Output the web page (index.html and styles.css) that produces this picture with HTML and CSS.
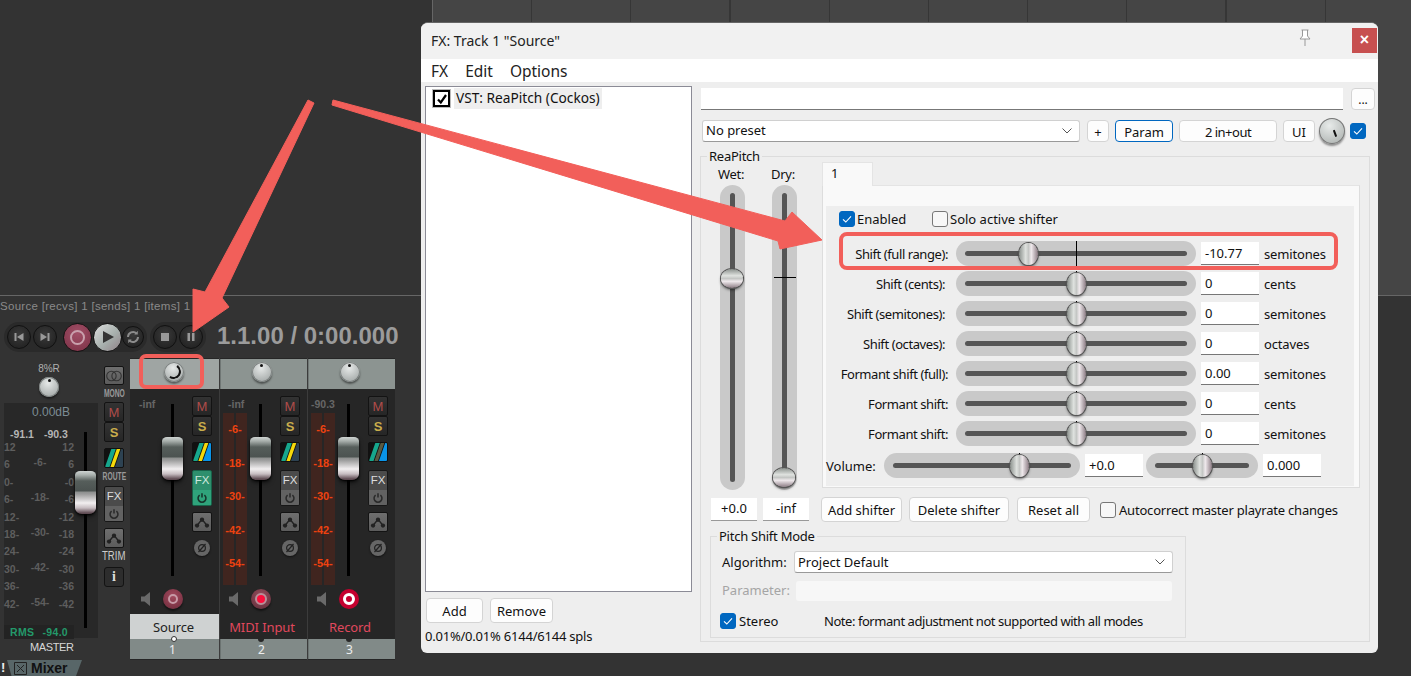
FILE: index.html
```html
<!DOCTYPE html>
<html lang="en">
<head>
    <meta charset="UTF-8">
    <title>FX: Track 1 "Source"</title>
    <link rel="stylesheet" href="styles.css">
</head>
<body>
<svg class="defs" width="0" height="0">
    <symbol id="power" viewBox="0 0 14 14"><path d="M4.2 3.6a4.6 4.6 0 1 0 5.6 0M7 1.5v5" fill="none" stroke="currentColor" stroke-width="1.8"/></symbol>
    <symbol id="env" viewBox="0 0 20 20"><path d="M4 14.5 10 7l6 7.5" fill="none" stroke="#222" stroke-width="1.6"/><circle cx="4.5" cy="14" r="2.4" fill="#222"/><circle cx="10" cy="7.5" r="2.4" fill="#222"/><circle cx="15.5" cy="14" r="2.4" fill="#222"/></symbol>
    <symbol id="speaker" viewBox="0 0 10 14"><path d="M0 4.5h3.5L9 0v14L3.5 9.5H0z" fill="#6a6a6a"/></symbol>
    <symbol id="phase" viewBox="0 0 12 12"><circle cx="6" cy="6" r="3.4" fill="none" stroke="#222" stroke-width="1.2"/><path d="M2.5 10 9.5 2" stroke="#222" stroke-width="1.2"/></symbol>
    <symbol id="check" viewBox="0 0 16 16"><path d="M4 8.3 6.8 11 12 5.4" fill="none" stroke="#fff" stroke-width="1.1"/></symbol>
    <symbol id="chev" viewBox="0 0 12 8"><path d="M1.5 1.5 6 6l4.5-4.5" fill="none" stroke="#555" stroke-width="1"/></symbol>
</svg>

<div class="app">
    <div class="arrange">
        <div class="tcp"></div>
        <div class="timeline"></div>
    </div>

    <div class="lower">
        <div class="track-info">Source [recvs] 1 [sends] 1 [items] 1</div>
        <div class="transport">
            <div class="pill">
                <span class="tbtn"><svg viewBox="0 0 12 12"><path d="M1.5 2h2v8h-2zM10.500 2v8L4 6z" fill="#999"/></svg></span>
                <span class="tbtn"><svg viewBox="0 0 12 12"><path d="M8.500 2h2v8h-2zM1.500 2v8L8 6z" fill="#999"/></svg></span>
                <span class="tbtn rec-big"><i></i></span>
                <span class="tbtn play"><svg viewBox="0 0 14 14"><path d="M2 1v12l11-6z" fill="#333"/></svg></span>
                <span class="tbtn loop"><svg viewBox="0 0 16 16"><path d="M3 8a5 5 0 0 1 8.500-3.500M13 8a5 5 0 0 1-8.500 3.500" fill="none" stroke="#8c8c8c" stroke-width="2"/><path d="M12.800 1.800v3.700H9.300zM3.200 14.200v-3.700h3.500z" fill="#8c8c8c"/></svg></span>
            </div>
            <div class="pill second">
                <span class="tbtn"><svg viewBox="0 0 12 12"><path d="M2 2h8v8H2z" fill="#999"/></svg></span>
                <span class="tbtn"><svg viewBox="0 0 12 12"><path d="M2.500 2h2.500v8H2.500zM7 2h2.500v8H7z" fill="#999"/></svg></span>
            </div>
            <div class="clock">1.1.00 / 0:00.000</div>
        </div>

        <div class="mixer">
            <div class="master">
                <div class="master-left">
                    <div class="pan-text">8%R</div>
                    <div class="knob small"><b></b></div>
                    <div class="master-meter">
                        <div class="master-db">0.00dB</div>
                        <div class="master-peaks"><span>-91.1</span><span>-90.3</span></div>
                        <div class="master-scale">
                            <div class="scale-col">
                                <span>12</span><span>6</span><span>0-</span><span>6-</span><span>12-</span><span>18-</span><span>24-</span><span>30-</span><span>36-</span><span>42-</span>
                            </div>
                            <div class="scale-mid">
                                <span>-6-</span><span>-18-</span><span>-30-</span><span>-42-</span><span>-54-</span>
                            </div>
                            <div class="scale-col right">
                                <span>12</span><span>6</span><span>-0</span><span>-6</span><span>-12</span><span>-18</span><span>-24</span><span>-30</span><span>-36</span><span>-42</span>
                            </div>
                            <div class="fader-col master-fader">
                                <div class="fader-track"><div class="fader-thumb master-thumb"></div></div>
                            </div>
                        </div>
                        <div class="rms"><span>RMS</span><span>-94.0</span></div>
                    </div>
                    <div class="master-name">MASTER</div>
                </div>
                <div class="master-btns">
                    <span class="mbtn grey mono"><svg viewBox="0 0 20 14" width="18" height="12"><circle cx="7" cy="7" r="5.500" fill="none" stroke="#333" stroke-width="1.300"/><circle cx="13" cy="7" r="5.500" fill="none" stroke="#333" stroke-width="1.300"/></svg></span>
                    <span class="mlabel">MONO</span>
                    <span class="mbtn m">M</span>
                    <span class="mbtn s">S</span>
                    <span class="route"><svg viewBox="0 0 20 20"><path d="M0 20 7 0h5L5 20z" fill="#16a78d"/><path d="M6 20 13 0h4l-7 20z" fill="#f5d90a"/><path d="M11 20 18 0h2v20z" fill="#2d4252"/></svg></span>
                    <span class="mlabel">ROUTE</span>
                    <span class="fx-btn"><em>FX</em><i><svg width="12" height="12"><use href="#power"/></svg></i></span>
                    <span class="mbtn grey env"><svg width="20" height="20"><use href="#env"/></svg></span>
                    <span class="mlabel light">TRIM</span>
                    <span class="mbtn info">i</span>
                </div>
            </div>

            <div class="strip selected">
                <div class="pan-head"><div class="knob turned"><b></b></div></div>
                <div class="strip-body">
                    <div class="strip-top">
                        <div class="meter-col"><span class="peak">-inf</span></div>
                        <div class="fader-col"><div class="fader-track"><div class="fader-thumb"></div></div></div>
                        <div class="btn-col">
                            <span class="mbtn m">M</span>
                            <span class="mbtn s">S</span>
                            <span class="route"><svg viewBox="0 0 20 20"><path d="M0 20 7 0h5L5 20z" fill="#16a78d"/><path d="M6 20 13 0h4l-7 20z" fill="#f5d90a"/><path d="M11 20 18 0h2v20z" fill="#0a94e8"/></svg></span>
                            <span class="fx-btn on"><em>FX</em><i><svg width="12" height="12"><use href="#power"/></svg></i></span>
                            <span class="mbtn grey env"><svg width="20" height="20"><use href="#env"/></svg></span>
                            <span class="phase"><svg width="12" height="12"><use href="#phase"/></svg></span>
                        </div>
                    </div>
                    <div class="strip-bottom">
                        <svg class="speaker" width="10" height="14"><use href="#speaker"/></svg>
                        <span class="rec off"><i></i></span>
                    </div>
                </div>
                <div class="strip-name">Source</div>
                <div class="strip-num"><i></i>1</div>
            </div>

            <div class="strip">
                <div class="pan-head"><div class="knob"><b></b></div></div>
                <div class="strip-body">
                    <div class="strip-top">
                        <div class="meter-col">
                            <span class="peak">-inf</span>
                            <div class="meter"><span>-6-</span><span>-18-</span><span>-30-</span><span>-42-</span><span>-54-</span></div>
                        </div>
                        <div class="fader-col"><div class="fader-track"><div class="fader-thumb"></div></div></div>
                        <div class="btn-col">
                            <span class="mbtn m">M</span>
                            <span class="mbtn s">S</span>
                            <span class="route"><svg viewBox="0 0 20 20"><path d="M0 20 7 0h5L5 20z" fill="#16a78d"/><path d="M6 20 13 0h4l-7 20z" fill="#f5d90a"/><path d="M11 20 18 0h2v20z" fill="#2d4252"/></svg></span>
                            <span class="fx-btn"><em>FX</em><i><svg width="12" height="12"><use href="#power"/></svg></i></span>
                            <span class="mbtn grey env"><svg width="20" height="20"><use href="#env"/></svg></span>
                            <span class="phase"><svg width="12" height="12"><use href="#phase"/></svg></span>
                        </div>
                    </div>
                    <div class="strip-bottom">
                        <svg class="speaker" width="10" height="14"><use href="#speaker"/></svg>
                        <span class="rec midi"><i></i></span>
                    </div>
                </div>
                <div class="strip-name">MIDI Input</div>
                <div class="strip-num"><i></i>2</div>
            </div>

            <div class="strip">
                <div class="pan-head"><div class="knob"><b></b></div></div>
                <div class="strip-body">
                    <div class="strip-top">
                        <div class="meter-col">
                            <span class="peak wide">-90.3</span>
                            <div class="meter"><span>-6-</span><span>-18-</span><span>-30-</span><span>-42-</span><span>-54-</span></div>
                        </div>
                        <div class="fader-col"><div class="fader-track"><div class="fader-thumb"></div></div></div>
                        <div class="btn-col">
                            <span class="mbtn m">M</span>
                            <span class="mbtn s">S</span>
                            <span class="route"><svg viewBox="0 0 20 20"><path d="M0 20 7 0h5L5 20z" fill="#16a78d"/><path d="M6 20 13 0h4l-7 20z" fill="#5a5a42"/><path d="M11 20 18 0h2v20z" fill="#0a94e8"/></svg></span>
                            <span class="fx-btn"><em>FX</em><i><svg width="12" height="12"><use href="#power"/></svg></i></span>
                            <span class="mbtn grey env"><svg width="20" height="20"><use href="#env"/></svg></span>
                            <span class="phase"><svg width="12" height="12"><use href="#phase"/></svg></span>
                        </div>
                    </div>
                    <div class="strip-bottom">
                        <svg class="speaker" width="10" height="14"><use href="#speaker"/></svg>
                        <span class="rec armed"><i></i></span>
                    </div>
                </div>
                <div class="strip-name">Record</div>
                <div class="strip-num"><i></i>3</div>
            </div>
        </div>
    </div>

    <div class="tabbar">
        <span class="bang">!</span>
        <div class="mixer-tab">
            <svg width="13" height="13" viewBox="0 0 13 13"><path d="M.5.5h12v12H.5zM3 3l7 7M10 3l-7 7" fill="none" stroke="#222"/></svg>
            <span>Mixer</span>
        </div>
    </div>
</div>

<!-- FX window -->
<div class="fxwin">
    <div class="titlebar">
        <span class="title">FX: Track 1 "Source"</span>
        <svg class="pin" width="16" height="18" viewBox="0 0 16 18"><path d="M4.500 1h7M5.500 1v6L3 10h10l-2.500-3V1M8 10v7" fill="#fff" stroke="#999"/></svg>
        <span class="closebtn">×</span>
    </div>
    <div class="menubar"><span>FX</span><span>Edit</span><span>Options</span></div>
    <div class="fxbody">
        <div class="leftcol">
            <div class="fxlist">
                <div class="fxitem">
                    <span class="oldcheck"><svg width="12" height="12" viewBox="0 0 12 12"><path d="M2 6.500 4.800 9.500 10 2" fill="none" stroke="#000" stroke-width="2.200"/></svg></span>
                    <span class="fxname">VST: ReaPitch (Cockos)</span>
                </div>
            </div>
            <div class="listbtns">
                <button class="btn addbtn">Add</button>
                <button class="btn removebtn">Remove</button>
            </div>
            <div class="status">0.01%/0.01% 6144/6144 spls</div>
        </div>

        <div class="rightcol">
            <div class="toprow">
                <div class="edit presetname"></div>
                <button class="btn dots">...</button>
            </div>
            <div class="presetrow">
                <div class="combo presetcombo"><span>No preset</span><svg width="12" height="8"><use href="#chev"/></svg></div>
                <button class="btn plus">+</button>
                <button class="btn param">Param</button>
                <button class="btn inout">2 in+out</button>
                <button class="btn uibtn">UI</button>
                <div class="knob wetknob"><b></b></div>
                <span class="chk on"><svg width="16" height="16"><use href="#check"/></svg></span>
            </div>

            <div class="group">
                <span class="legend">ReaPitch</span>
                <div class="mainrow">
                    <div class="wetdry">
                        <div class="vcol">
                            <span class="vlabel">Wet:</span>
                            <div class="vslider"><i></i><u style="top:92px"></u><b style="top:93px"></b></div>
                            <div class="valbox">+0.0</div>
                        </div>
                        <div class="vcol">
                            <span class="vlabel">Dry:</span>
                            <div class="vslider"><i></i><u style="top:92px"></u><b style="top:292px"></b></div>
                            <div class="valbox">-inf</div>
                        </div>
                    </div>

                    <div class="shiftercol">
                        <div class="tab">1</div>
                        <div class="tabpanel">
                            <div class="inner">
                                <div class="checks">
                                    <span class="chk on"><svg width="16" height="16"><use href="#check"/></svg></span><label class="enabled">Enabled</label>
                                    <span class="chk"></span><label>Solo active shifter</label>
                                </div>
                                <div class="rows">
                                    <div class="prow">
                                        <label>Shift (full range):</label>
                                        <div class="hslider"><i></i><u style="left:120px"></u><b style="left:72px"></b></div>
                                        <div class="edit num">-10.77</div><span>semitones</span>
                                    </div>
                                    <div class="prow inset">
                                        <label>Shift (cents):</label>
                                        <div class="hslider"><i></i><u style="left:120px"></u><b style="left:120px"></b></div>
                                        <div class="edit num">0</div><span>cents</span>
                                    </div>
                                    <div class="prow inset">
                                        <label>Shift (semitones):</label>
                                        <div class="hslider"><i></i><u style="left:120px"></u><b style="left:120px"></b></div>
                                        <div class="edit num">0</div><span>semitones</span>
                                    </div>
                                    <div class="prow inset">
                                        <label>Shift (octaves):</label>
                                        <div class="hslider"><i></i><u style="left:120px"></u><b style="left:120px"></b></div>
                                        <div class="edit num">0</div><span>octaves</span>
                                    </div>
                                    <div class="prow">
                                        <label>Formant shift (full):</label>
                                        <div class="hslider"><i></i><u style="left:120px"></u><b style="left:120px"></b></div>
                                        <div class="edit num">0.00</div><span>semitones</span>
                                    </div>
                                    <div class="prow">
                                        <label>Formant shift:</label>
                                        <div class="hslider"><i></i><u style="left:120px"></u><b style="left:120px"></b></div>
                                        <div class="edit num">0</div><span>cents</span>
                                    </div>
                                    <div class="prow">
                                        <label>Formant shift:</label>
                                        <div class="hslider"><i></i><u style="left:120px"></u><b style="left:120px"></b></div>
                                        <div class="edit num">0</div><span>semitones</span>
                                    </div>
                                </div>
                                <div class="volrow">
                                    <label>Volume:</label>
                                    <div class="hslider vol1"><i></i><u style="left:135px"></u><b style="left:135px"></b></div>
                                    <div class="edit num">+0.0</div>
                                    <div class="hslider vol2"><i></i><u style="left:56px"></u><b style="left:56px"></b></div>
                                    <div class="edit num">0.000</div>
                                </div>
                            </div>
                        </div>
                        <div class="shiftbtns">
                            <button class="btn addsh">Add shifter</button>
                            <button class="btn delsh">Delete shifter</button>
                            <button class="btn resetsh">Reset all</button>
                            <span class="chk"></span><label>Autocorrect master playrate changes</label>
                        </div>
                    </div>
                </div>

                <div class="group modegroup">
                    <span class="legend">Pitch Shift Mode</span>
                    <div class="moderow">
                        <label class="modelabel">Algorithm:</label>
                        <div class="combo algo"><span>Project Default</span><svg width="12" height="8"><use href="#chev"/></svg></div>
                    </div>
                    <div class="moderow paramrow">
                        <label class="modelabel disabled">Parameter:</label>
                        <div class="paramfield"></div>
                    </div>
                    <div class="moderow stereorow">
                        <span class="chk on"><svg width="16" height="16"><use href="#check"/></svg></span><label class="stereo">Stereo</label>
                        <span class="note">Note: formant adjustment not supported with all modes</span>
                    </div>
                </div>
            </div>
        </div>
    </div>
</div>

<!-- red annotations drawn over the screenshot -->
<svg class="marks" width="1411" height="676" viewBox="0 0 1411 676">
    <path d="M308 100 314 103 222 298 229 307 193 332 193 289 205 292z" fill="#f25f5a" stroke="#f25f5a" stroke-linejoin="round"/>
    <path d="M333 100 332 105 778 241 780 249 822 240 792 212 785 221z" fill="#f25f5a" stroke="#f25f5a" stroke-linejoin="round"/>
    <rect x="841" y="234" width="495" height="34" rx="6" fill="none" stroke="#f25f5a" stroke-width="4"/>
    <rect x="141" y="356" width="61" height="31" rx="5" fill="none" stroke="#f25f5a" stroke-width="4"/>
</svg>
</body>
</html>
```

FILE: styles.css
```css
* {
    box-sizing: border-box;
}
html, body {
    margin: 0;
    padding: 0;
    height: 100%;
    overflow: hidden;
    background: #333;
}
.defs {
    position: absolute;
}
.app {
    width: 1411px;
    height: 676px;
    display: flex;
    flex-direction: column;
    font-family: "Liberation Sans", Arial, sans-serif;
    color: #999;
}

/* arrange view */
.arrange {
    height: 296px;
    display: flex;
    border-bottom: 1px solid #666;
}
.tcp {
    width: 433px;
    background: #333;
    border-right: 1px solid #666;
}
.timeline {
    flex: 1;
    background: #454545 repeating-linear-gradient(90deg, transparent 0 98px, #363636 98px 99.200px);
}
.lower {
    height: 364px;
    background: #333;
}
.track-info {
    height: 20px;
    padding-top: 3px;
    font-size: 11.500px;
    line-height: 14px;
    color: #8a8a8a;
    letter-spacing: .3px;
    white-space: nowrap;
}

/* transport */
.transport {
    height: 42px;
    display: flex;
    align-items: flex-start;
    padding: 6px 0 0 4px;
}
.pill {
    display: flex;
    align-items: center;
    height: 30px;
    padding: 0 2px;
    background: #2a2a2a;
    border-radius: 15px;
}
.pill.second {
    margin-left: 3px;
}
.tbtn {
    width: 24px;
    height: 24px;
    margin: 0 1px;
    border-radius: 50%;
    background: radial-gradient(circle at 50% 40%, #3a3a3a, #1d1d1d);
    border: 1px solid #111;
    display: flex;
    align-items: center;
    justify-content: center;
}
.tbtn svg {
    width: 12px;
    height: 12px;
}
.rec-big {
    width: 29px;
    height: 29px;
    margin-left: 5px;
    margin-right: 0;
    background: radial-gradient(circle at 50% 35%, #a24f67, #7a3045);
}
.rec-big i {
    width: 15px;
    height: 15px;
    border-radius: 50%;
    border: 2px solid #c9a0ad;
}
.play {
    width: 29px;
    height: 29px;
    margin-left: 1px;
    background: linear-gradient(135deg, #ddd, #a7b0ad 55%, #8f8086);
}
.play svg {
    width: 14px;
    height: 14px;
}
.loop {
    width: 22px;
    height: 22px;
    margin-left: -1px;
}
.loop svg {
    width: 16px;
    height: 16px;
}
.clock {
    margin: 0 0 0 11px;
    font-size: 24px;
    line-height: 28px;
    font-weight: bold;
    color: #9b9b9b;
    white-space: nowrap;
}

/* mixer */
.mixer {
    height: 302px;
    display: flex;
}
.master {
    width: 130px;
    display: flex;
    background: #333;
}
.master-left {
    width: 98px;
    margin-left: 4px;
    display: flex;
    flex-direction: column;
    align-items: center;
}
.pan-text {
    margin: 5px 0 0 -8px;
    font-size: 10px;
    line-height: 12px;
    color: #b0b0b0;
}
.knob {
    position: relative;
    width: 20px;
    height: 20px;
    border-radius: 50%;
    background: radial-gradient(circle at 45% 30%, #e6e9e8, #a9aead 75%);
    box-shadow: inset 0 0 0 1px #7b807f, 0 2px 2px rgba(0, 0, 0, .45);
}
.knob b {
    position: absolute;
    left: 50%;
    top: 2px;
    width: 3px;
    height: 3px;
    margin-left: -1.500px;
    border-radius: 50%;
    background: #111;
}
.knob.small {
    margin: 2px 0 0 -8px;
}
.knob.turned b {
    left: 2px;
    top: 2px;
    width: 15px;
    height: 15px;
    margin: 0;
    border: 2px solid transparent;
    border-right-color: #111;
    border-bottom-color: #111;
    border-radius: 50%;
    background: none;
    transform: rotate(-12deg);
}
.master-meter {
    width: 94px;
    align-self: flex-start;
    height: 235px;
    margin-top: 6px;
    background: #282828;
    position: relative;
}
.master-db {
    margin-top: 3px;
    font-size: 12px;
    line-height: 13px;
    text-align: center;
    color: #7c8c94;
}
.master-peaks {
    display: flex;
    gap: 10px;
    padding: 9px 0 0 6px;
    font-size: 10.500px;
    line-height: 12px;
    font-weight: bold;
    color: #b5b5b5;
}
.master-scale {
    position: relative;
    display: flex;
    height: 172px;
    margin-top: -2px;
    padding-top: 1px;
    font-size: 10.500px;
    line-height: 17.400px;
    color: #5e5e5e;
    font-weight: bold;
}
.scale-col {
    width: 22px;
    display: flex;
    flex-direction: column;
}
.scale-col span {
    flex: none;
    height: 17.400px;
}
.scale-col.right {
    width: 20px;
    align-items: flex-end;
}
.scale-mid {
    width: 28px;
    margin-top: 6px;
    display: flex;
    flex-direction: column;
    align-items: center;
    line-height: 35px;
    margin-bottom: -20px;
}
.master-fader {
    position: absolute;
    left: 81px;
    top: -6px;
    height: 208px;
    width: 0;
}
.rms {
    position: absolute;
    left: 0;
    bottom: -1px;
    width: 70px;
    height: 14px;
    padding: 0 6px;
    background: #232323;
    display: flex;
    justify-content: space-between;
    font-size: 10.500px;
    line-height: 15px;
    font-weight: bold;
    letter-spacing: .3px;
    color: #23996a;
}
.master-name {
    align-self: stretch;
    margin-top: 2px;
    padding-left: 26px;
    font-size: 11px;
    line-height: 14px;
    letter-spacing: -.4px;
    color: #d8d8d8;
}
.master-btns {
    width: 20px;
    margin-left: 2px;
    padding-top: 8px;
    display: flex;
    flex-direction: column;
    align-items: center;
}
.mlabel {
    height: 17px;
    font-size: 10.500px;
    line-height: 17px;
    font-weight: bold;
    color: #9a9a9a;
    transform: scaleX(.64);
}
.mlabel.light {
    font-weight: normal;
    font-size: 12px;
    line-height: 16px;
    height: 19px;
    color: #ccc;
    transform: scaleX(.8);
}
.mbtn {
    width: 20px;
    height: 20px;
    border-radius: 2px;
    background: linear-gradient(#333, #262626);
    border: 1px solid #131313;
    display: flex;
    align-items: center;
    justify-content: center;
    font-size: 13px;
    line-height: 1;
    flex: none;
}
.mbtn.grey {
    background: linear-gradient(#6e6e6e, #5c5c5c);
}
.mbtn.mono {
    margin-bottom: 0;
    height: 19px;
}
.mbtn.m {
    color: #b04c4a;
}
.mbtn.s {
    color: #c9ad4b;
    font-weight: bold;
}
.mbtn.info {
    color: #ddd;
    font-family: "Liberation Serif", serif;
    font-size: 14px;
    font-weight: bold;
    background: #2d2d2d;
    border-radius: 3px;
}
.route {
    display: block;
    width: 20px;
    height: 20px;
    margin-top: 6px;
    border-radius: 2px;
    overflow: hidden;
    background: #111;
    border: 1px solid #111;
    flex: none;
}
.route svg {
    display: block;
    width: 100%;
    height: 100%;
}
.master-btns .route + .mlabel {
    margin-bottom: 1px;
}
.fx-btn {
    width: 20px;
    height: 36px;
    margin-top: 8px;
    border: 1px solid #171717;
    border-radius: 2px;
    background: #4b4b4b;
    display: flex;
    flex-direction: column;
    flex: none;
    overflow: hidden;
    color: #ddd;
}
.master-btns .fx-btn {
    margin-top: 0;
}
.fx-btn em {
    height: 19px;
    font-style: normal;
    font-size: 11.500px;
    line-height: 19px;
    text-align: center;
}
.fx-btn i {
    flex: 1;
    background: #626262;
    color: #2a2a2a;
    display: flex;
    align-items: center;
    justify-content: center;
}
.fx-btn.on {
    background: #2e8f6d;
    color: #cfe8de;
    border-color: #18634a;
}
.fx-btn.on i {
    background: #2fa37b;
    color: #16332a;
}
.env {
    margin-top: 6px;
}
.strip {
    width: 88px;
    margin-left: 0;
    display: flex;
    flex-direction: column;
    background: #262626;
    border-left: 1px solid #3c3c3c;
}
.strip.selected {
    width: 89px;
    border-left: 0;
}
.pan-head {
    height: 31px;
    margin-top: 1px;
    background: #8c9491;
    display: flex;
    justify-content: center;
    padding: 3px 5px 0 0;
    border-left: 1px solid #707775;
}
.strip.selected .pan-head {
    background: #9fa5a3;
    border-left: 0;
    padding-right: 1px;
}
.strip-body {
    flex: 1;
    display: flex;
    flex-direction: column;
}
.strip-top {
    height: 193px;
    padding: 7px 7px 0 3px;
    display: flex;
}
.selected .strip-top {
    padding-left: 4px;
}
.meter-col {
    width: 24px;
}
.peak {
    display: block;
    height: 17px;
    font-size: 10.500px;
    line-height: 16px;
    white-space: nowrap;
    color: #666;
    padding-left: 5px;
    font-weight: bold;
}
.peak.wide {
    padding-left: 0;
}
.meter {
    height: 172px;
    padding-top: 8px;
    background: linear-gradient(90deg, #40251f 0 11px, #262626 11px 13px, #40251f 13px);
    display: flex;
    flex-direction: column;
    align-items: center;
    font-size: 11px;
    font-weight: bold;
    color: #ee4210;
    white-space: nowrap;
}
.meter span {
    flex: none;
    height: 33.600px;
    line-height: 16px;
}
.fader-col {
    flex: 1;
    display: flex;
    justify-content: center;
    padding: 1px 6px 0 0;
}
.fader-track {
    position: relative;
    width: 3px;
    height: 172px;
    margin-top: 7px;
    background: #000;
}
.master-fader {
    padding: 0;
}
.master-fader .fader-track {
    height: 196px;
    margin-top: 0;
    flex: none;
}
.fader-thumb {
    position: absolute;
    left: -9px;
    top: 33px;
    width: 21px;
    height: 43px;
    border-radius: 5px 5px 7px 7px / 4px 4px 6px 6px;
    background: linear-gradient(#cfd4d2 0, #a9b0ad 4px, #565e5b 10px, #4c5351 20px, #8d908e 21px, #9b9b9b 23px, #f2eff0 32px, #c6bcc0 37px, #5f4b53 42px);
    box-shadow: 0 1px 2px #000, 0 3px 4px rgba(0, 0, 0, .5);
}
.fader-thumb.master-thumb {
    top: 39px;
}
.btn-col {
    width: 20px;
    display: flex;
    flex-direction: column;
    align-items: center;
}
.phase {
    width: 16px;
    height: 16px;
    margin-top: 8px;
    border-radius: 50%;
    background: #666;
    box-shadow: 0 1px 2px #111;
    display: flex;
    align-items: center;
    justify-content: center;
}
.strip-bottom {
    height: 32px;
    display: flex;
    align-items: center;
    padding: 2px 0 0 9px;
}
.selected .strip-bottom {
    padding-left: 11px;
}
.speaker {
    flex: none;
}
.rec {
    width: 20px;
    height: 20px;
    margin-left: 12px;
    border-radius: 50%;
    display: flex;
    align-items: center;
    justify-content: center;
    box-shadow: 0 2px 2px rgba(0, 0, 0, .5);
}
.rec i {
    border-radius: 50%;
    display: block;
}
.rec.off {
    background: radial-gradient(circle at 50% 35%, #a34a5e, #6c2a3a);
}
.rec.off i {
    width: 10px;
    height: 10px;
    border: 2px solid #c79aa6;
}
.rec.midi {
    background: radial-gradient(circle at 50% 35%, #99505f, #5c2b37);
}
.rec.midi i {
    width: 12px;
    height: 12px;
    background: #fb0f3c;
    border: 2px solid #b89099;
}
.rec.armed {
    background: #c4002e;
    box-shadow: none;
}
.rec.armed i {
    width: 12px;
    height: 12px;
    border: 3px solid #fff;
}
.strip-name {
    height: 25px;
    padding-right: 3px;
    font-family: "Noto Sans", sans-serif;
    font-size: 13px;
    line-height: 26px;
    text-align: center;
    color: #e0485d;
    letter-spacing: -.1px;
    white-space: nowrap;
}
.selected .strip-name {
    background: #cfd2d2;
    color: #222;
    padding-right: 2px;
}
.strip-num {
    position: relative;
    height: 20px;
    padding-right: 5px;
    background: #818a88;
    border-left: 1px solid #6b7371;
    color: #eee;
    font-family: "Noto Sans", sans-serif;
    font-size: 12px;
    line-height: 21px;
    text-align: center;
    margin-bottom: 1px;
}
.selected .strip-num {
    border-left: 0;
    padding-right: 4px;
}
.strip-num i {
    position: absolute;
    left: 50%;
    top: -3px;
    width: 6px;
    height: 6px;
    margin-left: -6px;
    border-radius: 50%;
    background: #262626;
}
.selected .strip-num i {
    background: #fff;
    margin-left: -4px;
    border: 1px solid #333;
}

/* bottom docker tab */
.tabbar {
    flex: 1;
    display: flex;
    background: #333;
    height: 16px;
}
.bang {
    width: 6px;
    margin-left: 1px;
    font-size: 13px;
    line-height: 16px;
    font-weight: bold;
    color: #eee;
}
.mixer-tab {
    width: 75px;
    height: 16px;
    display: flex;
    align-items: center;
    gap: 4px;
    padding-left: 7px;
    background: #586668;
    clip-path: polygon(0 0, 100% 0, 92% 100%, 6% 100%);
    color: #111;
    font-size: 14px;
    font-weight: bold;
}

/* FX window */
.fxwin {
    position: absolute;
    left: 421px;
    top: 22px;
    width: 957px;
    height: 631px;
    display: flex;
    flex-direction: column;
    border-radius: 7px 7px 6px 6px;
    border-top: 1px solid #666;
    background: #eee;
    overflow: hidden;
    font-family: "Noto Sans", "Open Sans", sans-serif;
    font-size: 13px;
    color: #111;
}
.titlebar {
    height: 36px;
    background: #f1f1f1;
    display: flex;
    align-items: center;
    padding: 0 0 2px 10px;
}
.title {
    flex: 1;
    font-size: 14px;
    color: #222;
}
.pin {
    margin: -4px 39px 0 0;
}
.closebtn {
    width: 25px;
    height: 25px;
    margin: 2px 1px 1px 0;
    background: #c75050;
    color: #fff;
    font-size: 16px;
    line-height: 24px;
    font-weight: bold;
    text-align: center;
    font-family: "Liberation Sans", sans-serif;
}
.menubar {
    height: 23px;
    background: #fff;
    display: flex;
    gap: 17px;
    padding-left: 10px;
    font-size: 15.500px;
    line-height: 25px;
    color: #222;
}
.fxbody {
    flex: 1;
    display: flex;
    padding: 4px 0 0 4px;
    gap: 9px;
}
.leftcol {
    width: 267px;
}
.fxlist {
    height: 506px;
    background: #fff;
    border: 1px solid #8b8b96;
}
.fxitem {
    display: flex;
    align-items: center;
    padding: 1px 0 0 7px;
    height: 22px;
}
.oldcheck {
    width: 17px;
    height: 17px;
    border: 2px solid #000;
    outline: 1px solid #bbb;
    background: #fff;
    display: flex;
    align-items: center;
    justify-content: center;
    flex: none;
}
.fxname {
    margin-left: 4px;
    height: 21px;
    padding: 0 2px;
    font-size: 13.700px;
    line-height: 20px;
    background: #eee;
    white-space: nowrap;
}
.btn {
    height: 25px;
    padding: 2px 0 0;
    font: inherit;
    line-height: 1;
    color: #111;
    background: #fdfdfd;
    border: 1px solid #d4d4d4;
    border-radius: 4px;
    white-space: nowrap;
    flex: none;
}
.listbtns {
    display: flex;
    gap: 7px;
    margin: 6px 0 0 1px;
}
.addbtn {
    width: 57px;
}
.removebtn {
    width: 63px;
}
.status {
    margin-top: 4px;
    line-height: 18px;
    white-space: nowrap;
    letter-spacing: -.22px;
}
.rightcol {
    width: 674px;
}
.toprow {
    display: flex;
    gap: 8px;
    margin-top: 2px;
}
.edit {
    background: #fff;
    border-bottom: 1px solid #777;
    height: 22px;
}
.presetname {
    width: 642px;
}
.dots {
    width: 24px;
    height: 22px;
    font-size: 12px;
}
.presetrow {
    display: flex;
    align-items: center;
    margin: 10px 0 0 1px;
    height: 22px;
    gap: 6px;
}
.combo {
    background: #fff;
    border: 1px solid #d0d0d0;
    border-bottom-color: #999;
    border-radius: 3px;
    height: 22px;
    display: flex;
    align-items: center;
    justify-content: space-between;
    padding: 0 6px 0 3px;
}
.presetcombo {
    width: 378px;
    margin-right: 1px;
}
.presetcombo span {
    margin-top: -2px;
}
.plus {
    width: 22px;
    height: 22px;
}
.param {
    width: 58px;
    height: 22px;
    border: 1px solid #0067c0;
}
.inout {
    width: 98px;
    height: 22px;
    letter-spacing: -.5px;
}
.uibtn {
    width: 32px;
    height: 22px;
}
.wetknob {
    width: 26px;
    height: 26px;
    margin-left: -2px;
    background: radial-gradient(circle at 40% 30%, #e8ebea, #b2b7b5 80%);
    box-shadow: 0 2px 2px rgba(0, 0, 0, .4), inset 0 0 0 1px #777;
}
.wetknob b {
    left: 15px;
    top: 12px;
    width: 1.500px;
    height: 7px;
    margin: 0;
    border-radius: 0;
    transform: rotate(-20deg);
}
.chk {
    width: 16px;
    height: 16px;
    border: 1px solid #777;
    border-radius: 3px;
    background: #f7f7f7;
    display: block;
    flex: none;
}
.chk svg {
    display: block;
    margin: -1px;
}
.chk.on {
    background: #0067c0;
    border-color: #0067c0;
}
.presetrow .chk {
    margin-left: -1px;
}
.group {
    position: relative;
    margin: 14px 0 0 -1px;
    width: 670px;
    height: 486px;
    border: 1px solid #dcdcdc;
    padding: 5px 0 0 10px;
}
.legend {
    position: absolute;
    left: 6px;
    top: -9px;
    padding: 0 2px;
    line-height: 16px;
    letter-spacing: -.25px;
    background: #eee;
}
.mainrow {
    display: flex;
    gap: 13px;
}
.wetdry {
    display: flex;
    gap: 6px;
    padding-top: 4px;
}
.vcol {
    width: 46px;
    display: flex;
    flex-direction: column;
    align-items: center;
}
.vlabel {
    height: 19px;
    margin-right: 6px;
    line-height: 16px;
    letter-spacing: -.3px;
}
.vslider {
    position: relative;
    width: 25px;
    height: 305px;
    margin-right: 3px;
    background: #c9c9c9;
    border-radius: 12.500px;
    display: flex;
    justify-content: center;
    padding: 8px 0;
}
.vslider i {
    display: block;
    width: 5px;
    background: #555;
    border-radius: 3px;
}
.vslider u {
    position: absolute;
    left: 2px;
    width: 22px;
    height: 1px;
    background: #000;
}
.vslider b {
    position: absolute;
    left: 1px;
    width: 22px;
    height: 19px;
    margin-top: -9px;
    border-radius: 50%;
    background: linear-gradient(#8b918d, #dfe2df 35%, #c4c6c4 50%, #efe9ec 65%, #8c7c84);
    box-shadow: 0 0 0 1px #555, 0 2px 3px rgba(0, 0, 0, .6);
}
.valbox {
    width: 46px;
    height: 23px;
    margin-top: 8px;
    background: #fff;
    border-bottom: 1px solid #999;
    text-align: center;
    line-height: 20px;
}
.shiftercol {
    width: 538px;
}
.tab {
    width: 51px;
    height: 24px;
    margin-bottom: -1px;
    position: relative;
    background: #f9f9f9;
    border: 1px solid #e4e4e4;
    border-bottom: 0;
    padding-left: 8px;
    line-height: 21px;
}
.tabpanel {
    height: 303px;
    padding: 20px 5px 1px 3px;
    background: #f9f9f9;
    border: 1px solid #ddd;
    border-top-color: #e4e4e4;
}
.inner {
    height: 280px;
    background: #eee;
    padding-top: 5px;
}
.checks {
    display: flex;
    align-items: center;
    height: 16px;
    margin-left: 13px;
}
.checks label {
    margin-left: 2px;
}
.checks .enabled {
    width: 75px;
}
.rows {
    margin-top: 14px;
    display: flex;
    flex-direction: column;
    gap: 5px;
}
.prow {
    height: 25px;
    display: flex;
    align-items: center;
    white-space: nowrap;
}
.prow label {
    width: 122px;
    margin-right: 8px;
    text-align: right;
    letter-spacing: -.42px;
}
.prow.inset label {
    padding-right: 3px;
}
.prow > span {
    letter-spacing: -.15px;
}
.hslider {
    position: relative;
    width: 240px;
    height: 25px;
    background: #c9c9c9;
    border-radius: 12.500px;
    padding: 0 9px;
    display: flex;
    align-items: center;
    flex: none;
}
.hslider i {
    display: block;
    flex: 1;
    height: 5px;
    background: #555;
    border-radius: 3px;
}
.hslider u {
    position: absolute;
    top: 0;
    bottom: 0;
    width: 1px;
    background: #000;
}
.hslider b {
    position: absolute;
    top: 2px;
    width: 19px;
    height: 22px;
    margin-left: -9px;
    border-radius: 50%;
    background: linear-gradient(90deg, #8b918d, #dfe2df 35%, #c4c6c4 50%, #efe9ec 65%, #8c7c84);
    box-shadow: 0 0 0 1px #555, 0 2px 3px rgba(0, 0, 0, .6);
}
.num {
    width: 58px;
    height: 23px;
    margin: 0 5px;
    padding-left: 4px;
    line-height: 23px;
    flex: none;
}
.volrow {
    display: flex;
    align-items: center;
    height: 25px;
    margin-top: 7px;
    white-space: nowrap;
}
.volrow label {
    width: 58px;
}
.vol1 {
    width: 196px;
}
.vol2 {
    width: 112px;
    margin-left: -2px;
}
.shiftbtns {
    display: flex;
    align-items: center;
    margin: 9px 0 0 -1px;
    white-space: nowrap;
}
.shiftbtns label {
    letter-spacing: -.2px;
}
.addsh {
    width: 81px;
}
.delsh {
    width: 100px;
    margin-left: 7px;
}
.resetsh {
    width: 73px;
    margin-left: 8px;
}
.shiftbtns .chk {
    margin: 0 3px 0 10px;
}
.modegroup {
    margin: 14px 0 0 -1px;
    width: 476px;
    height: 102px;
    padding: 14px 0 0 11px;
}
.moderow {
    display: flex;
    align-items: center;
    white-space: nowrap;
}
.modelabel {
    width: 72px;
}
.disabled {
    color: #a5a5a5;
    margin-right: 2px;
    margin-top: -2px;
}
.algo {
    width: 379px;
}
.paramrow {
    margin-top: 8px;
}
.paramfield {
    width: 376px;
    height: 20px;
    background: #f7f7f7;
    border-radius: 3px;
}
.stereorow {
    margin: 11px 0 0 -2px;
}
.stereo {
    width: 85px;
    margin-left: 3px;
}
.note {
    letter-spacing: -.45px;
}

/* annotations */
.marks {
    position: absolute;
    left: 0;
    top: 0;
    pointer-events: none;
}
```
